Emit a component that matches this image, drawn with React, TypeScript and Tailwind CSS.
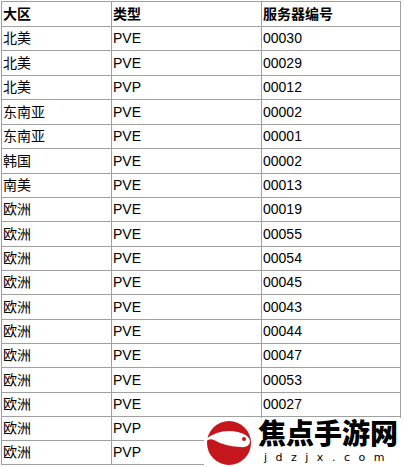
import React from "react";

const rows: [string, string, string][] = [
  ["北美", "PVE", "00030"],
  ["北美", "PVE", "00029"],
  ["北美", "PVP", "00012"],
  ["东南亚", "PVE", "00002"],
  ["东南亚", "PVE", "00001"],
  ["韩国", "PVE", "00002"],
  ["南美", "PVE", "00013"],
  ["欧洲", "PVE", "00019"],
  ["欧洲", "PVE", "00055"],
  ["欧洲", "PVE", "00054"],
  ["欧洲", "PVE", "00045"],
  ["欧洲", "PVE", "00043"],
  ["欧洲", "PVE", "00044"],
  ["欧洲", "PVE", "00047"],
  ["欧洲", "PVE", "00053"],
  ["欧洲", "PVE", "00027"],
  ["欧洲", "PVP", ""],
  ["欧洲", "PVP", ""],
];

const heights = [
  "h-[25px]", "h-[24px]", "h-[25px]", "h-[24px]", "h-[25px]", "h-[24px]", "h-[25px]",
  "h-[24px]", "h-[24px]", "h-[25px]", "h-[24px]", "h-[24px]", "h-[25px]", "h-[24px]",
  "h-[24px]", "h-[25px]", "h-[24px]", "h-[24px]", "h-[24px]",
];

const font = { fontFamily: '"Liberation Sans", "Noto Sans CJK SC", sans-serif' };

function Row({ cells, h, bold }: { cells: string[]; h: string; bold?: boolean }) {
  const base = `${h} border-r border-b border-[#a0a0a0] flex items-center pl-[1px] text-[14px] text-black ${bold ? "font-bold" : ""}`;
  return (
    <div className="flex">
      <div className={`${base} w-[110px]`}>{cells[0]}</div>
      <div className={`${base} w-[150px]`}>{cells[1]}</div>
      <div className={`${base} w-[139px]`}>{cells[2]}</div>
    </div>
  );
}

function Logo() {
  return (
    <div className="absolute left-[204px] top-[418px] w-[200px] h-[49px] bg-white flex items-start gap-[6px] pl-[2px] pt-[2px]">
      <svg className="shrink-0" width="46" height="46" viewBox="0 0 46 46">
        <circle cx="23" cy="23" r="22" fill="#c4161c" />
        <path d="M0 19 Q14 8 32 12 Q44 15 44 22 Q43 28 34 27 Q18 26 8 20 Q4 18 0 21 Z" fill="#fff" />
        <circle cx="38" cy="19" r="2" fill="#c4161c" />
      </svg>
      <div className="flex flex-col -mt-[2px]">
        <div
          className="text-[28px] font-black leading-[28px] text-black"
          style={{ fontFamily: '"Noto Sans CJK SC", sans-serif' }}
        >
          焦点手游网
        </div>
        <div
          className="mt-[5px] pl-[6px] text-[11px] leading-[14px] text-black tracking-[8.5px] whitespace-nowrap"
          style={{ fontFamily: '"DejaVu Sans", sans-serif' }}
        >
          jdzjx.com
        </div>
      </div>
    </div>
  );
}

export default function App() {
  return (
    <div className="relative w-[404px] h-[467px] bg-white overflow-hidden" style={font}>
      <div className="ml-[1px] mt-[1px] w-[400px] border-l border-t border-[#a0a0a0]">
        <Row cells={["大区", "类型", "服务器编号"]} h={heights[0]} bold />
        {rows.map((r, i) => (
          <Row key={i} cells={r} h={heights[i + 1]} />
        ))}
      </div>
      <Logo />
    </div>
  );
}
